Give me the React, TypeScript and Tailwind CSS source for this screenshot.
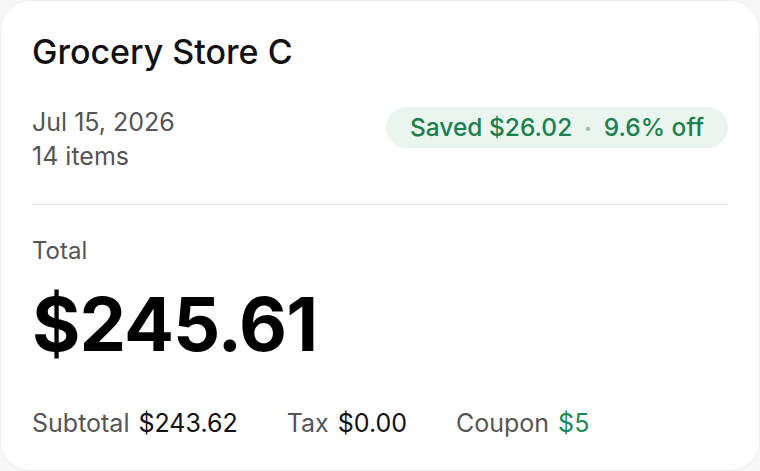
export default function App() {
  return (
    <div className="h-[471px] w-[760px] bg-[#f6f6f6] font-['Inter',sans-serif]">
      <div className="flex h-full w-full flex-col rounded-[30px] border border-[#ededed] bg-white px-[31px]">
        <h1 className="mt-[31px] text-[34px] font-medium leading-[40px] text-[#111]">
          Grocery Store C
        </h1>

        <div className="mt-[33px] flex items-start justify-between">
          <div className="text-[25px] leading-[34px] text-[#555]">
            <div>Jul 15, 2026</div>
            <div>14 items</div>
          </div>
          <div className="mt-[2px] flex h-[41px] items-center gap-[12px] rounded-full bg-[#ebf5ef] px-[24px] text-[24.5px] font-medium text-[#1b7f4e]">
            <span>Saved $26.02</span>
            <span className="text-[14px] text-[#9bbfaa]">•</span>
            <span>9.6% off</span>
          </div>
        </div>

        <div className="mt-[31px] h-px w-full bg-[#e4e4e4]" />

        <div className="mt-[31px] text-[24px] leading-[30px] text-[#555]">Total</div>
        <div className="mt-[18px] text-[74px] font-bold leading-[80px] tracking-[-1px] text-black">
          $245.61
        </div>

        <div className="mt-[44px] flex items-center gap-[49px] text-[25px] leading-[30px]">
          <div className="flex gap-[9px]">
            <span className="text-[#555]">Subtotal</span>
            <span className="text-[#111]">$243.62</span>
          </div>
          <div className="flex gap-[9px]">
            <span className="text-[#555]">Tax</span>
            <span className="text-[#111]">$0.00</span>
          </div>
          <div className="flex gap-[9px]">
            <span className="text-[#555]">Coupon</span>
            <span className="text-[#1b8a55]">$5</span>
          </div>
        </div>
      </div>
    </div>
  );
}
